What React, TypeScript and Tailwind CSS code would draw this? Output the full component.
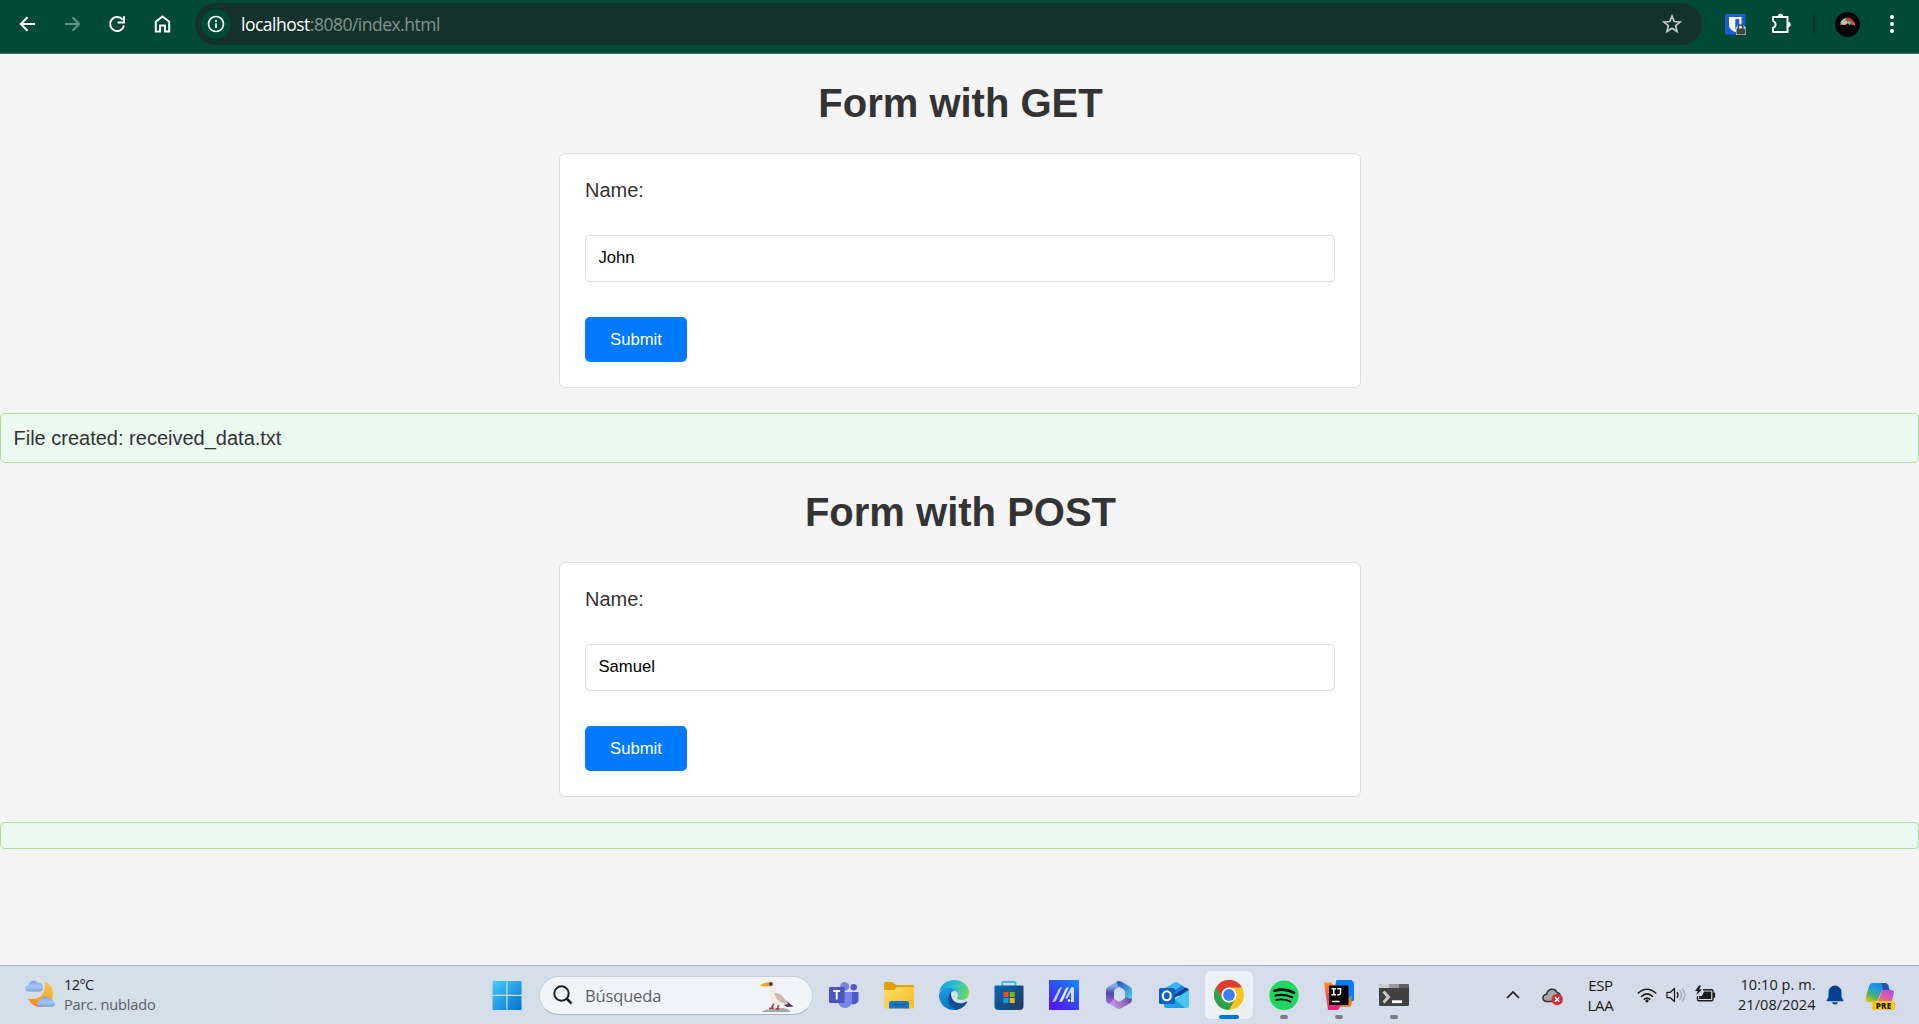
import React from "react";

const SEGOE = "font-['Open_Sans','Noto_Sans',sans-serif]";

function Svg({ w = 30, h = 30, box, children }: { w?: number; h?: number; box?: string; children: React.ReactNode }) {
  return (
    <svg width={w} height={h} viewBox={box ?? `0 0 ${w} ${h}`} fill="none" className="block shrink-0">
      {children}
    </svg>
  );
}

function Toolbar() {
  return (
    <header className="flex h-[54px] items-start border-b border-[#3c7663] bg-[#004a36]">
      <div className="flex h-12 w-[195px] items-center">
        <span className="ml-[17px]">
          <Svg w={20} h={20}>
            <path d="M18 10H4M10.5 3.2 3.8 10l6.7 6.8" stroke="#fff" strokeWidth="2" />
          </Svg>
        </span>
        <span className="ml-[25px]">
          <Svg w={20} h={20}>
            <path d="M3 10h14M10.500 3.200 17.200 10l-6.700 6.800" stroke="#66927f" strokeWidth="2" />
          </Svg>
        </span>
        <span className="ml-[25px]">
          <Svg w={20} h={20}>
            <path d="M15.600 5.600A7 7 0 1 0 17 11.500" stroke="#fff" strokeWidth="2" />
            <path d="M17 2.200V8.600H10.600" stroke="#fff" strokeWidth="2" />
          </Svg>
        </span>
        <span className="ml-[25px]">
          <Svg w={20} h={20}>
            <path d="M3.800 17.600V7.700L10.500 2.500l6.700 5.200v9.900h-4.300v-6H8.100v6z" stroke="#fff" strokeWidth="2" />
          </Svg>
        </span>
      </div>
      <div className="mt-[3px] flex h-[42px] w-[1507px] items-center rounded-full bg-[#15312b]">
        <span className="ml-[6px] flex size-[30px] items-center justify-center rounded-full bg-[#004a36]">
          <Svg w={18} h={18}>
            <circle cx="9" cy="9" r="7.500" stroke="#f4f8f6" strokeWidth="1.700" />
            <path d="M9 8.200v4.700M9 5v1.900" stroke="#f4f8f6" strokeWidth="1.800" />
          </Svg>
        </span>
        <span className={`ml-[10px] text-[17.500px] leading-6 tracking-[-0.500px] whitespace-nowrap text-[#84958f] ${SEGOE}`}>
          <span className="text-white">localhost</span>:8080/index.html
        </span>
        <span className="mr-5 ml-auto">
          <Svg w={20} h={20}>
            <path
              d="m10 2 2.200 5.500 5.900.400-4.500 3.800 1.400 5.700-5-3.100-5 3.100 1.400-5.700L1.900 7.900l5.900-.400z"
              stroke="#c4cbc9"
              strokeWidth="1.700"
            />
          </Svg>
        </span>
      </div>
      <div className="flex h-12 items-center">
        <span className="ml-[23px]">
          <Svg w={21} h={21}>
            <rect width="20.500" height="20.500" rx="1.500" fill="#1a5ddb" />
            <path d="M4 3h12.500v8c0 3.500-3.500 6-6.200 7C7.500 17 4 14.500 4 11z" fill="#fff" />
            <path d="M10.300 5h4v6c0 1.900-2 3.400-4 4.400z" fill="#1a5ddb" />
            <path d="M11 13.500 13 11h5l2.500 2.500V21H11z" fill="#d9dee6" />
            <path d="M13.200 15v-1.500a2.400 2.400 0 0 1 4.800 0V15" stroke="#444" strokeWidth="1.500" />
            <rect x="11.500" y="14.500" width="8.500" height="6" rx="1" fill="#444" />
          </Svg>
        </span>
        <span className="ml-[25px]">
          <Svg w={22} h={22}>
            <path
              d="M2 4h14.500v15H2v-4.300c3.400-1 3.400-5.600 0-6.600z"
              stroke="#fff"
              strokeWidth="2"
              strokeLinejoin="round"
            />
            <path d="M7 3.500a2.500 2.500 0 0 1 5 0zM17 9a2.500 2.500 0 0 1 0 5z" fill="#fff" stroke="#fff" strokeWidth=".600" />
          </Svg>
        </span>
        <span className="ml-[20px] h-5 w-[2px] bg-[#15312b]" />
        <span className="ml-[20px]">
          <Svg w={25} h={25}>
            <circle cx="12.500" cy="12.500" r="12.500" fill="#000" />
            <path d="M5 11c1.500-3.500 4-5 7-5.300L10.500 9z" fill="#8fcdbd" />
            <path d="M10.500 5.700c4-.700 7.500 1.500 9 4.800L11 9z" fill="#d9303a" />
            <path d="m4.800 12.500 2-2.500 4.500-1.500 2 2-3 2.500z" fill="#f0b48c" />
            <path d="m12.500 8.800 4 .700-1.500 4-3-2.500z" fill="#49bfc7" />
            <path d="m16 9.500 3.500 1 .800 3-4-.700z" fill="#f0563e" />
          </Svg>
        </span>
        <span className="ml-[30px] flex w-1 flex-col gap-[3px]">
          <i className="size-1 rounded-full bg-white" />
          <i className="size-1 rounded-full bg-white" />
          <i className="size-1 rounded-full bg-white" />
        </span>
      </div>
    </header>
  );
}

function NameForm({ title, value }: { title: string; value: string }) {
  return (
    <section className="pt-[27px]">
      <h1 className="pl-[2px] text-center text-[40px] leading-[45px] font-bold">{title}</h1>
      <form
        className="mx-auto mt-[27px] flex h-[235px] w-[802px] flex-col items-start rounded-[6px] border border-[#ddd] bg-white px-[25px] pt-[25px]"
        onSubmit={(e) => e.preventDefault()}
      >
        <label className="h-[23px] pl-[0.500px] text-[20px] leading-[23px]">Name:</label>
        <input
          type="text"
          defaultValue={value}
          className="mt-[33px] h-[47px] w-full rounded-[5px] border border-[#ddd] bg-white px-[13px] pb-px text-[16.667px] text-black outline-none"
        />
        <button type="submit" className="mt-[35px] h-[45px] w-[102px] rounded-[5px] bg-[#007bff] pl-px text-[16.667px] text-white">
          Submit
        </button>
      </form>
    </section>
  );
}

function TeamsIcon() {
  return (
    <Svg>
      <path d="M20 12h9.500v8c0 3-3.500 5-7 4z" fill="#5059c9" />
      <circle cx="24.700" cy="7.200" r="3.200" fill="#5059c9" />
      <circle cx="15.700" cy="6.400" r="4.500" fill="#7b83eb" />
      <path d="M9 12h14v9a7 7 0 0 1-14 0z" fill="#7b83eb" />
      <rect x="0" y="7" width="15.500" height="16" rx="1.200" fill="#4b53bc" />
      <path d="M4.200 11h7M7.700 11v8.500" stroke="#fff" strokeWidth="1.900" />
    </Svg>
  );
}

function ExplorerIcon() {
  return (
    <Svg>
      <path d="M0 3.500Q0 2 1.500 2h7l3.500 3h16.500Q30 5 30 6.500V12H0z" fill="#e0a106" />
      <path d="M0 10h10l3-3h17v20.500q0 1-1 1H1q-1 0-1-1z" fill="url(#folder)" />
      <path d="M5 28.500V23q0-2 2-2h16q2 0 2 2v5.500z" fill="#1377c8" />
      <path d="M8.500 24.600h13" stroke="#08538f" strokeWidth="1.300" />
      <defs>
        <linearGradient id="folder" x1="0" y1="7" x2="20" y2="29" gradientUnits="userSpaceOnUse">
          <stop stopColor="#ffdd6b" />
          <stop offset="1" stopColor="#fcc12c" />
        </linearGradient>
      </defs>
    </Svg>
  );
}

function EdgeIcon() {
  return (
    <Svg>
      <defs>
        <linearGradient id="edgeTop" x1="2" y1="6" x2="29" y2="16" gradientUnits="userSpaceOnUse">
          <stop stopColor="#1ba5de" />
          <stop offset=".5" stopColor="#2fc2c9" />
          <stop offset="1" stopColor="#72df4b" />
        </linearGradient>
        <linearGradient id="edgeLeft" x1="4" y1="9" x2="14" y2="30" gradientUnits="userSpaceOnUse">
          <stop stopColor="#1b9de2" />
          <stop offset="1" stopColor="#0a6bbd" />
        </linearGradient>
      </defs>
      <path d="M.200 13C1 5 7.500 0 15 0c9 0 15 6 15 12.500 0 5-3.500 7.500-7.500 7.500-3 0-5-1-4.500-2.200 2.200-2.800.500-7-3.500-7.800C8 8.500 3 8.500.200 13z" fill="url(#edgeTop)" />
      <path d="M0 14.500C2.500 7 13 6 17 10.500c-3-.500-5.500 2-5.500 5 0 8 9 13 16.500 7C25 27.500 20 30 15 30 6 30-.500 22.500 0 14.500z" fill="url(#edgeLeft)" />
      <path d="M12 12.500c-5 5-3 14 5.500 17.200 4-.700 8-3.200 10.300-7.200.400-.700-.200-1.200-.900-.800-7.900 4.300-16-1.200-14.900-9.200z" fill="#114a91" />
    </Svg>
  );
}

function StoreIcon() {
  return (
    <Svg>
      <defs>
        <linearGradient id="bag" x1="3" y1="5" x2="27" y2="30" gradientUnits="userSpaceOnUse">
          <stop stopColor="#0868b1" />
          <stop offset="1" stopColor="#21395f" />
        </linearGradient>
      </defs>
      <path d="M8.300 7V3.200q0-1.200 1.200-1.200h10.800q1.200 0 1.200 1.200V7" stroke="#35bdf2" strokeWidth="2" />
      <path d="M.500 6.500q0-1 1-1h27q1 0 1 1V26q0 4-4 4h-21q-4 0-4-4z" fill="url(#bag)" />
      <path d="M9.500 12h5v5h-5z" fill="#f25022" />
      <path d="M15.700 12h5v5h-5z" fill="#7fba00" />
      <path d="M9.500 18h5v5h-5z" fill="#00a4ef" />
      <path d="M15.700 18h5v5h-5z" fill="#ffb900" />
    </Svg>
  );
}

function MyAsusIcon() {
  return (
    <Svg>
      <defs>
        <linearGradient id="asus" x1="30" y1="0" x2="8" y2="30" gradientUnits="userSpaceOnUse">
          <stop stopColor="#0f8bff" />
          <stop offset=".5" stopColor="#2e50f3" />
          <stop offset="1" stopColor="#5518f0" />
        </linearGradient>
      </defs>
      <path d="M0 0h30v30H0z" fill="url(#asus)" />
      <path d="m3.200 22 6.800-13.500q.700-1.500 3.200-1.500L7 20.500Q6.200 22 3.200 22z" fill="#b9caff" />
      <path d="m10 22 6.800-13.500q.700-1.500 3.200-1.500L13.800 20.500Q13 22 10 22z" fill="#e1e8ff" />
      <path d="m16 18.500 6.300-11.300H25V22h-3V12l-3.700 6.500z" fill="#cfdcff" />
      <circle cx="20" cy="20.500" r="1.300" fill="#fff" />
    </Svg>
  );
}

function M365Icon() {
  return (
    <Svg>
      <defs>
        <linearGradient id="mA" x1="4" y1="6" x2="3" y2="24" gradientUnits="userSpaceOnUse">
          <stop stopColor="#8aa5ea" />
          <stop offset=".4" stopColor="#4a48a8" />
          <stop offset="1" stopColor="#a871d6" />
        </linearGradient>
        <linearGradient id="mB" x1="14" y1="2" x2="28" y2="17" gradientUnits="userSpaceOnUse">
          <stop stopColor="#2c58b5" />
          <stop offset="1" stopColor="#4bc9f6" />
        </linearGradient>
        <linearGradient id="mC" x1="8" y1="26" x2="26" y2="18" gradientUnits="userSpaceOnUse">
          <stop stopColor="#c993e8" />
          <stop offset="1" stopColor="#6e4fa4" />
        </linearGradient>
      </defs>
      <path d="M14 1 4 6.800Q2 8 2 10.300v9.400Q2 22 4 23.200l1.500.900L10 20V11.500q0-1.500 1.300-2.200L18 5.500z" fill="url(#mA)" />
      <path d="M12.500 1.800q2.500-1.500 5 0L26 6.800q2 1.200 2 3.500v9.400q0 1.500-1 2.500l-6-4.500v-6q0-1.500-1.300-2.200L14 6z" fill="url(#mB)" />
      <path d="m4 23.200 8.800 5q2.200 1.300 4.400 0l8.800-5q2-1.200 2-3.500v-.700L21 17q0 1.500-1.300 2.200l-3.400 2q-1.300.700-2.600 0L10 18.500l-3 4.300q-1.500 1.500-3 .400z" fill="url(#mC)" />
    </Svg>
  );
}

function OutlookIcon() {
  return (
    <Svg>
      <path d="M5 9 15.500 2.700q1.500-.900 3 0L30 10v6H5z" fill="#1a79d0" />
      <path d="m13 4.300 2.500-1.600q1.500-.900 3 0L23 5.500 9 15H5V9z" fill="#35b7f0" />
      <path d="M30 10v15.500q0 2.500-2.500 2.500H7.500Q5 28 5 25.500V13l11 6z" fill="#45c6f1" />
      <path d="m30 9.500-15.500 9L15 15l12-7.500z" fill="#0a3f99" />
      <path d="m5 21 10-2.500L26 28H8q-3 0-3-3z" fill="#1694dd" opacity=".75" />
      <rect y="8" width="16" height="16" rx="1.500" fill="#0e62bd" />
      <ellipse cx="7.800" cy="15.800" rx="4" ry="4.500" stroke="#fff" strokeWidth="2.100" />
    </Svg>
  );
}

function ChromeIcon() {
  return (
    <Svg>
      <circle cx="15" cy="15" r="15" fill="#fcc31e" />
      <path d="M2 7.500A15 15 0 0 1 28 7.500H15a7.500 7.500 0 0 0-6.500 11.200z" fill="#e33b2e" />
      <path d="M2 7.500A15 15 0 0 0 15 30l6.500-11.300a7.500 7.500 0 0 1-13 0z" fill="#2ba24c" />
      <circle cx="15" cy="15" r="7.500" fill="#fff" />
      <circle cx="15" cy="15" r="5.900" fill="#3b7ded" />
    </Svg>
  );
}

function SpotifyIcon() {
  return (
    <Svg>
      <circle cx="15" cy="15.300" r="14.700" fill="#1ed760" />
      <path d="M5.500 10.700c6.500-1.900 13.500-1.200 19.500 2" stroke="#000" strokeWidth="2.700" strokeLinecap="round" />
      <path d="M6.500 15.600c6-1.600 11.500-1 16.700 1.800" stroke="#000" strokeWidth="2.200" strokeLinecap="round" />
      <path d="M7.300 20c5-1.200 9.600-.700 14 1.700" stroke="#000" strokeWidth="1.900" strokeLinecap="round" />
    </Svg>
  );
}

function IntelliJIcon() {
  return (
    <Svg>
      <defs>
        <linearGradient id="ij" x1="2" y1="3" x2="6" y2="28" gradientUnits="userSpaceOnUse">
          <stop stopColor="#fd8b23" />
          <stop offset=".5" stopColor="#fb4a4c" />
          <stop offset="1" stopColor="#fe2280" />
        </linearGradient>
      </defs>
      <path d="M0 2.500h7l4 4v17l6 2-3 4.500H4z" fill="url(#ij)" />
      <path d="M12.500 0h15L30 2.500v18l-6 3-14-13z" fill="#087cfa" />
      <path d="m15 24 12.500-8v8.500L25.500 27l-9-.500z" fill="#f97a12" />
      <path d="M5 5.500h19.500V25H5z" fill="#000" />
      <path d="M7.500 8.800H12M9.750 8.800v6M7.500 14.800H12M13.200 8.800h3.300v4.300q0 1.700-1.700 1.700h-1.600M8 21.500h7.500" stroke="#fff" strokeWidth="1.500" />
    </Svg>
  );
}

function TerminalIcon() {
  return (
    <Svg>
      <rect y="4" width="30" height="22" rx="1.500" fill="#414141" />
      <path d="M0 8V5.500Q0 4 1.500 4H10v4z" fill="#cfcfcf" />
      <path d="M10 4h10v4H10z" fill="#999" />
      <path d="M20 4h8.500Q30 4 30 5.500V8H20z" fill="#606060" />
      <path d="m4.500 11.500 5 5.500-5 5.500" stroke="#c9c9c9" strokeWidth="3" />
      <path d="M13 21.700h10" stroke="#fff" strokeWidth="2.800" />
    </Svg>
  );
}

const apps = [
  { icon: <TeamsIcon /> },
  { icon: <ExplorerIcon /> },
  { icon: <EdgeIcon /> },
  { icon: <StoreIcon /> },
  { icon: <MyAsusIcon /> },
  { icon: <M365Icon /> },
  { icon: <OutlookIcon /> },
  { icon: <ChromeIcon />, active: true },
  { icon: <SpotifyIcon />, running: true },
  { icon: <IntelliJIcon />, running: true },
  { icon: <TerminalIcon />, running: true },
];

function Weather() {
  return (
    <div className="flex w-[480px] items-center pl-[25px]">
      <Svg>
        <defs>
          <linearGradient id="moon" x1="18" y1="2" x2="12" y2="30" gradientUnits="userSpaceOnUse">
            <stop stopColor="#f9c04a" />
            <stop offset=".5" stopColor="#f3b02f" />
            <stop offset="1" stopColor="#ee7a1c" />
          </linearGradient>
          <linearGradient id="cloud" x1="0" y1="0" x2="0" y2="1">
            <stop stopColor="#7fa2e6" />
            <stop offset=".6" stopColor="#a3c5f8" />
            <stop offset="1" stopColor="#7c9fe0" />
          </linearGradient>
        </defs>
        <path d="M19.500 1.800C26 4 29 10 27.800 16 26.500 23 21 27.500 14.500 27 9.500 26.700 5.500 23.500 3 18.500c6 1.500 11.500 0 14.500-4.500 2.500-3.700 3-8 2-12.200z" fill="url(#moon)" />
        <path d="M3.500 11.500C-.800 11.500-1 5.500 3.500 5 4.500-.300 11-1 12.800 3c3-.800 5 1.500 4.700 3.500 1.500 1.500.500 5-2.500 5z" fill="url(#cloud)" />
        <path d="M15.500 26.700c-4.300 0-4-5.700 0-6.200 1.200-5 7-5 8.700-1.700 2.700-.500 4.300 1 4.300 3 2.500 1.200 1.700 4.900-1 4.900z" fill="url(#cloud)" />
      </Svg>
      <div className="ml-[9px] text-[14.500px] leading-5 whitespace-nowrap">
        <div className="tracking-[-0.600px] text-[#1c1e22]">12°C</div>
        <div className="tracking-[-0.120px] text-[#5b5e66]">Parc. nublado</div>
      </div>
    </div>
  );
}

function Seabird() {
  return (
    <Svg w={38} h={34}>
      <path d="M3.500 34q0-2 8-3l13-1q6 1 7 4z" fill="#a3a6ab" />
      <path d="M15 25.500 12.500 30M20 26l-1.500 4.500M10 30.300h5M16.500 31h4" stroke="#9c4a3b" strokeWidth="1.600" />
      <path d="m20 17 14.500 11.500-6.500.500-9-6z" fill="#4f3852" />
      <path d="M9 8c-1-5.500 6.500-6.500 7.500-1.500.700 3.500-1 5 .500 8 4.500.500 9 5 12 11.500-6 2-14 1.500-17-3-2.500-4-1-8-1.500-11.500z" fill="#f3ece1" />
      <path d="M15.500 15c6 0 9 4 13 10.500-5 .500-11.500-3-13-10.500z" fill="#c9b9b0" />
      <path d="M.800 7.800Q4 4.500 9.500 4l1 4.200Q6 9.200.800 7.800z" fill="#f6a31e" />
      <circle cx="11.800" cy="6" r="2" fill="#493a45" />
    </Svg>
  );
}

function Tray() {
  return (
    <div className="flex flex-1 items-center">
      <span className="ml-[83.500px]">
        <Svg w={16} h={16}>
          <path d="m2 11 6-6 6 6" stroke="#1b1b1b" strokeWidth="1.600" />
        </Svg>
      </span>
      <span className="mt-1 ml-[21px]">
        <Svg w={22} h={20}>
          <path d="M5 14.500C0 14.500-.500 8 4.500 7.200 6 1.500 13 .500 15 5.500c3 .500 4 3 3 5.500l-4 3.500z" fill="#a4a7a8" stroke="#2f3336" strokeWidth="1.500" />
          <circle cx="15.200" cy="12.500" r="5.700" fill="#da2a37" />
          <path d="m13 10.300 4.400 4.400m0-4.400L13 14.700" stroke="#fff" strokeWidth="1.500" />
        </Svg>
      </span>
      <div className="ml-[18.500px] w-[36px] text-center text-[15px] leading-5 tracking-[-0.300px]">
        <div>ESP</div>
        <div>LAA</div>
      </div>
      <span className="ml-[18.500px]">
        <Svg w={20} h={20}>
          <path d="M.800 8.500q9.200-8.500 18.400 0M4 11.700q6-5.700 12 0M6.700 14.600q3.300-3 6.600 0" stroke="#1b1b1b" strokeWidth="1.500" />
          <circle cx="10" cy="15.800" r="1.600" fill="#1b1b1b" />
        </Svg>
      </span>
      <span className="ml-[8.500px]">
        <Svg w={21} h={20}>
          <path d="M1 7.300h3.300L8.500 3.500v13l-4.200-3.800H1z" stroke="#1b1b1b" strokeWidth="1.300" strokeLinejoin="round" />
          <path d="M11 7.200q2 2.800 0 5.600" stroke="#1b1b1b" strokeWidth="1.300" />
          <path d="M13.500 5.200q3.500 4.800 0 9.600M16.200 3.300q5 6.700 0 13.400" stroke="#a6abb5" strokeWidth="1.300" />
        </Svg>
      </span>
      <span className="ml-[8px]">
        <Svg w={22} h={20}>
          <path d="M8 4.700h8.500q1.500 0 1.500 1.500v8.100q0 1.500-1.500 1.500H4q-1.500 0-1.500-1.500v-3" stroke="#1b1b1b" strokeWidth="1.400" />
          <path d="M9 6.500h7.200v7.500H4.200V11H7z" fill="#1b1b1b" />
          <path d="M18.500 8h1.200v4.300h-1.200z" fill="#1b1b1b" stroke="#1b1b1b" />
          <path d="M4 .500 0 6h2.700L1.500 10 7 4.500H4.200L6 .500z" fill="#1b1b1b" />
        </Svg>
      </span>
      <div className="ml-auto text-right text-[14.500px] leading-5 tracking-[0.050px] whitespace-nowrap">
        <div>10:10 p. m.</div>
        <div>21/08/2024</div>
      </div>
      <span className="ml-[10.500px]">
        <Svg w={18} h={20}>
          <path d="M9 .500a6.500 6.500 0 0 0-6.500 6.500v5L.700 15.300q-.300.900.600.900h15.400q.900 0 .600-.900L15.500 12V7A6.500 6.500 0 0 0 9 .500z" fill="#004191" />
          <path d="M6 17.300h6q-.800 2.200-3 2.200t-3-2.200z" fill="#004191" />
        </Svg>
      </span>
      <span className="mr-[24px] ml-[21px]">
        <Svg>
          <defs>
            <linearGradient id="cpA" x1="14" y1="2" x2="3" y2="22" gradientUnits="userSpaceOnUse">
              <stop stopColor="#1788e6" />
              <stop offset=".35" stopColor="#209fd0" />
              <stop offset=".65" stopColor="#58b45c" />
              <stop offset="1" stopColor="#f4c51c" />
            </linearGradient>
            <linearGradient id="cpB" x1="27" y1="9" x2="14" y2="27" gradientUnits="userSpaceOnUse">
              <stop stopColor="#a550e2" />
              <stop offset=".5" stopColor="#ec5f9c" />
              <stop offset="1" stopColor="#fb933a" />
            </linearGradient>
          </defs>
          <path d="M8 2h12q2.500 0 3.300 2.500L24.500 9H19q-2.500 0-3.200 2.500L13 19q-.700 2-3 2H3.500Q0 21 .700 17L4 5q1-3 4-3z" fill="url(#cpA)" />
          <path d="M18 9h8q3.500 0 2.700 4L27 20q-1 4-5 4H9q3 0 4-3l3-9q.700-3 2-3z" fill="url(#cpB)" />
          <path d="M16.500 2H20q2.500 0 3.300 2.500L24.500 9H18z" fill="#2454ae" />
        </Svg>
        <span className="relative -mt-[10px] -mb-px ml-[7px] flex h-[9px] w-[23px] items-center justify-center rounded-[2px] bg-[#fdc80e] text-[8px] leading-[9px] font-extrabold tracking-[0.200px] text-[#222]">
          PRE
        </span>
      </span>
    </div>
  );
}

function Taskbar() {
  return (
    <footer className={`flex h-[59px] items-stretch border-t border-[#a9b1bf] bg-linear-to-r from-[#d3dfe9] via-[#d5deea] to-[#d4dbea] text-[#1b1b1b] ${SEGOE}`}>
      <Weather />
      <div className="flex w-[54px] items-center justify-center">
        <Svg>
          <defs>
            <linearGradient id="win" x1="0" y1="0" x2="30" y2="30" gradientUnits="userSpaceOnUse">
              <stop stopColor="#4cd0fc" />
              <stop offset="1" stopColor="#0070d1" />
            </linearGradient>
          </defs>
          <path d="M.500 2Q.500 1 1.500 1h12.800v13.800H.500zM15.500 1h13q1 0 1 1v12.800h-14zM.500 16h13.800v14H1.500q-1 0-1-1zM15.500 16h14v13q0 1-1 1h-13z" fill="url(#win)" />
        </Svg>
      </div>
      <div className="mt-[9.500px] ml-[5px] flex h-[39px] w-[274px] items-center rounded-full border border-[#c7ced9] border-b-[#aab3c0] bg-[#f1f5f9]">
        <span className="ml-[13px]">
          <Svg w={20} h={20}>
            <circle cx="8.500" cy="8.500" r="7.200" stroke="#1f1f1f" strokeWidth="2" />
            <path d="m13.500 13.500 5 5" stroke="#1f1f1f" strokeWidth="2.500" />
          </Svg>
        </span>
        <span className="mt-px ml-[12px] text-[16.500px] leading-6 tracking-[-0.150px] text-[#5f6063]">Búsqueda</span>
        <span className="mr-[15px] ml-auto">
          <Seabird />
        </span>
      </div>
      <nav className="ml-[3.500px] flex">
        {apps.map((app, i) => (
          <div key={i} className="flex w-[55px] justify-center pt-[5px]">
            <div
              className={
                app.active
                  ? "flex h-12 w-12 flex-col items-center rounded-[5px] bg-[#ebf0f7] pt-[9px] shadow-[0_0_1px_#aab4c4]"
                  : "flex h-12 w-12 flex-col items-center pt-[9px]"
              }
            >
              {app.icon}
              {app.active && <i className="mt-[5px] h-1 w-5 shrink-0 rounded-full bg-[#0078d7]" />}
              {app.running && <i className="mt-[5px] h-1 w-2 shrink-0 rounded-full bg-[#797f88]" />}
            </div>
          </div>
        ))}
      </nav>
      <Tray />
    </footer>
  );
}

export default function App() {
  return (
    <div className="flex h-[1024px] w-[1919px] flex-col overflow-hidden">
      <Toolbar />
      <main className="flex-1 bg-[#f4f4f4] font-['Liberation_Sans',Arial,sans-serif] text-[20px] leading-[23px] text-[#333]">
        <NameForm title="Form with GET" value="John" />
        <div className="mt-[25px] h-[50px] rounded-[5px] border border-[#b2dba1] bg-[#eafaf1] p-[12.500px]">
          File created: received_data.txt
        </div>
        <NameForm title="Form with POST" value="Samuel" />
        <div className="mt-[25px] h-[27px] rounded-[5px] border border-[#b2dba1] bg-[#eafaf1]" />
      </main>
      <Taskbar />
    </div>
  );
}
